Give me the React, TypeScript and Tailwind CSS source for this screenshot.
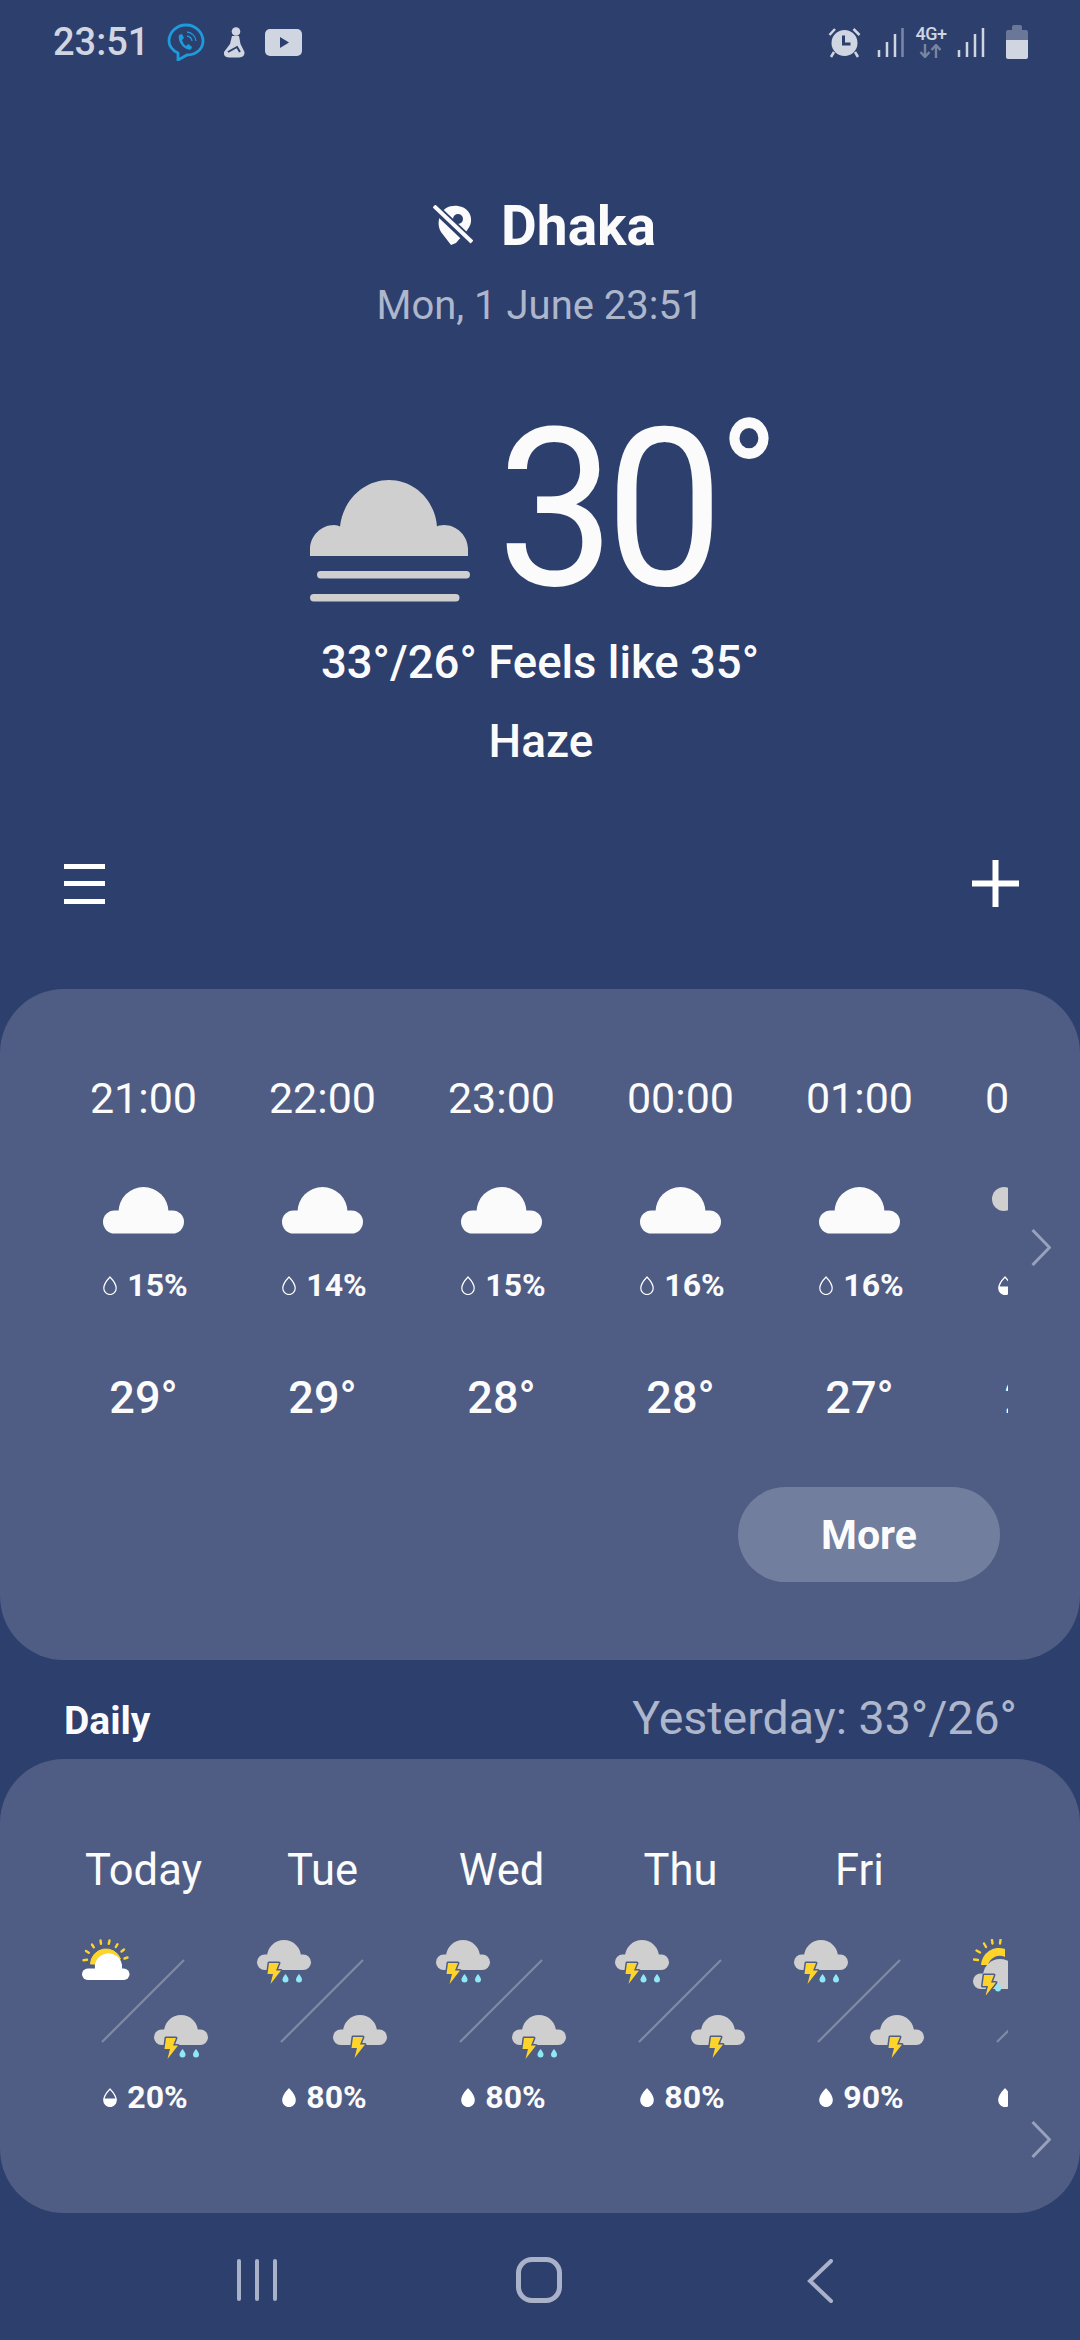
const FONT = "font-['Roboto',sans-serif]"

const hours = [
  { time: "21:00", pop: "15%", temp: "29°" },
  { time: "22:00", pop: "14%", temp: "29°" },
  { time: "23:00", pop: "15%", temp: "28°" },
  { time: "00:00", pop: "16%", temp: "28°" },
  { time: "01:00", pop: "16%", temp: "27°" },
  { time: "02:00", pop: "20%", temp: "27°" },
]

type Kind = "sun" | "rain" | "storm" | "sunstorm"
type Level = "empty" | "half" | "full"

const days: { name: string; top: Kind; bottom: Kind; pop: string; level: Level }[] = [
  { name: "Today", top: "sun", bottom: "rain", pop: "20%", level: "half" },
  { name: "Tue", top: "rain", bottom: "storm", pop: "80%", level: "full" },
  { name: "Wed", top: "rain", bottom: "rain", pop: "80%", level: "full" },
  { name: "Thu", top: "rain", bottom: "storm", pop: "80%", level: "full" },
  { name: "Fri", top: "rain", bottom: "storm", pop: "90%", level: "full" },
  { name: "Sat", top: "sunstorm", bottom: "storm", pop: "60%", level: "full" },
]

function Drop({ level }: { level: Level }) {
  const shape = "M7 1C7 1 13.2 7.4 13.2 12.3A6.2 6.2 0 0 1 .8 12.3C.8 7.4 7 1 7 1Z"
  return (
    <svg width="14" height="19" viewBox="0 0 14 19" className="shrink-0">
      <path d={shape} fill={level === "full" ? "#ffffff" : "none"} stroke="#ffffff" strokeWidth="1.2" />
      {level === "half" && <path d="M.8 10.5H13.2V12.3A6.2 6.2 0 0 1 .8 12.3Z" fill="#ffffff" />}
    </svg>
  )
}

function Cloud() {
  return (
    <svg width="81" height="47" viewBox="0 0 81 47" className="mx-auto">
      <path d="M15.5 25A25 25 0 0 1 65.5 25V40H15.5Z" fill="#fbfbfc" />
      <rect x="0" y="23.500" width="81" height="23" rx="11.500" fill="#fbfbfc" />
    </svg>
  )
}

function HazeIcon() {
  return (
    <svg width="160" height="122" viewBox="0 0 160 122" className="shrink-0">
      <path d="M0 76V69C0 56 11 45 24 45Q28 45 30 46.500C33 20 54 0 79 0S125 20 127 46.500Q129 45 134 45C147 45 158 56 158 69V76Z" fill="#cfcfcf" />
      <rect x="7" y="91" width="153" height="7.500" rx="3.700" fill="#cfcfcf" />
      <rect x="0" y="114" width="149.500" height="7.500" rx="3.700" fill="#cfcfcf" />
    </svg>
  )
}

function Bolt({ x, y }: { x: number; y: number }) {
  return (
    <g transform={`translate(${x} ${y})`}>
      <path d="M3 0H13L10 7.500H15L4.500 21L7 11H1.500Z" fill="#ffd42a" stroke="#4f5d84" strokeWidth="3" paintOrder="stroke" strokeLinejoin="round" />
    </g>
  )
}

function RainDrop({ x }: { x: number }) {
  return <path d={`M${x} 35C${x} 35 ${x + 3} 38.500 ${x + 3} 40.500A3 3 0 0 1 ${x - 3} 40.500C${x - 3} 38.500 ${x} 35 ${x} 35Z`} fill="#8fe8f5" />
}

function GreyCloud() {
  return (
    <g fill="#cfcfcf">
      <path d="M10 18A17 17 0 0 1 44 18V28H10Z" />
      <rect x="0" y="15.500" width="54" height="15.500" rx="7.700" />
    </g>
  )
}

function WeatherIcon({ kind }: { kind: Kind }) {
  if (kind === "sun") {
    return (
      <svg width="48" height="42" viewBox="0 0 48 42" className="block">
        <g stroke="#ffd42a" strokeWidth="2.400" strokeLinecap="round">
          <path d="M1.500 21.300L5 20.800M4 12L6.800 13.800M10 5.500L11.800 8.300M18.500 1.500L19 4.800M27.500 1.500L26.800 4.800M35.500 5.200L33.800 8M42 10.500L39.500 12.500M45.500 18.500L42.500 19.500" />
        </g>
        <path d="M8.500 25A15.500 15.500 0 0 1 38.500 20L35 21A13 13 0 0 0 14 25Z" fill="#ffd42a" stroke="#ffd42a" strokeWidth="1" />
        <path d="M13 30A13.500 13.500 0 0 1 40 26V34H13Z" fill="#ffffff" />
        <rect x="0" y="29.500" width="47.500" height="11.500" rx="5.700" fill="#ffffff" />
      </svg>
    )
  }
  if (kind === "sunstorm") {
    return (
      <svg width="60" height="56" viewBox="0 0 60 56" className="block">
        <g stroke="#ffd42a" strokeWidth="2.400" strokeLinecap="round">
          <path d="M1 20.500L5 21M3.500 11.500L7 13.500M11 4.500L13 8M19 1L19.500 4.500M27.500 1L27 4.500" />
        </g>
        <path d="M8 26A18 18 0 0 1 32 10V18A12 12 0 0 0 15 26Z" fill="#ffd42a" />
        <g transform="translate(0 19)">
          <GreyCloud />
          <Bolt x={8} y={17} />
        </g>
        <path d="M25 44C25 44 28 47.500 28 49.500A3 3 0 0 1 22 49.500C22 47.500 25 44 25 44Z" fill="#8fe8f5" />
      </svg>
    )
  }
  return (
    <svg width="55" height="45" viewBox="0 0 55 45" className="block overflow-visible">
      <GreyCloud />
      {kind === "rain" ? (
        <>
          <Bolt x={9} y={24} />
          <RainDrop x={28.500} />
          <RainDrop x={42} />
        </>
      ) : (
        <Bolt x={17} y={23} />
      )}
    </svg>
  )
}

function Chevron({ className }: { className: string }) {
  return (
    <svg width="20" height="37" viewBox="0 0 20 37" className={className}>
      <path d="M1.500 1L18.500 18.500L1.500 36" fill="none" stroke="#98a2bb" strokeWidth="3" />
    </svg>
  )
}

function StatusBar() {
  return (
    <div className="flex h-[80px] shrink-0 items-center justify-between pl-[53px] pr-[52px] pt-[4px]">
      <div className="flex items-center">
        <span className="text-[38px] font-medium leading-none text-[#d0d5e2]">23:51</span>
        <svg width="38" height="38" viewBox="0 0 38 38" className="ml-[18px]">
          <path d="M19 2C28.500 2 36 9.500 36 18C36 26 29 32 20 32L11 37V30C5 27 2 23 2 18C2 9.500 9.500 2 19 2Z" fill="none" stroke="#1e9bdc" strokeWidth="2.800" />
          <path d="M12 12L15 11L17 15L15 17Q16 21 19 23L21.500 21L25 24L24 26.500C18 28 10 19 12 12Z" fill="#1e9bdc" />
          <path d="M20 9A10 10 0 0 1 29 18M20 13A6 6 0 0 1 25 18" fill="none" stroke="#1e9bdc" strokeWidth="1.300" />
        </svg>
        <svg width="22" height="31" viewBox="0 0 22 31" className="ml-[18px]">
          <circle cx="13" cy="4.500" r="4.300" fill="#d0d5e2" />
          <path d="M9 9H16L17.500 17L21.500 25Q22 30 16 30.500H6Q0 30 1 25L7 17Z" fill="#d0d5e2" />
          <path d="M5 25L14 20L17 25" fill="none" stroke="#2d3f6c" strokeWidth="2" />
        </svg>
        <svg width="37" height="27" viewBox="0 0 37 27" className="ml-[20px]">
          <rect width="37" height="27" rx="5" fill="#d0d5e2" />
          <path d="M15 8L24 13.500L15 19Z" fill="#2d3f6c" />
        </svg>
      </div>
      <div className="flex items-center">
        <svg width="33" height="32" viewBox="0 0 33 32">
          <circle cx="16.500" cy="17" r="13" fill="#d0d5e2" />
          <path d="M15.500 9.500V18H22.500" fill="none" stroke="#2d3f6c" strokeWidth="3" />
          <path d="M1.500 9L7 3M25.500 3L31.500 9M6 26L3 31M27 26L30 31" stroke="#d0d5e2" strokeWidth="2.500" />
        </svg>
        <svg width="28" height="30" viewBox="0 0 28 30" className="ml-[16px]">
          <g stroke="#d0d5e2" strokeWidth="2.500">
            <path d="M2 30V23M10 30V15M18 30V7" />
            <path d="M25.500 30V1" stroke="#7d88a6" />
          </g>
        </svg>
        <div className="ml-[10px] flex w-[32px] flex-col items-center">
          <span className="text-[18px] font-medium leading-[14px] tracking-[-0.5px] text-[#d0d5e2]">4G+</span>
          <svg width="24" height="14" viewBox="0 0 24 14" className="mt-[3px]">
            <path d="M6 0V12M1.500 8L6 13L10.500 8M17 14V2M12.500 6L17 1L21.500 6" fill="none" stroke="#79859f" strokeWidth="2.400" />
          </svg>
        </div>
        <svg width="28" height="30" viewBox="0 0 28 30" className="ml-[10px]">
          <path d="M2 30V23M10 30V15M18 30V7M26 30V1" stroke="#d0d5e2" strokeWidth="2.500" />
        </svg>
        <div className="ml-[21px] flex w-[22px] flex-col items-center">
          <div className="h-[5px] w-[10px] rounded-t-[2px] bg-[#6b7799]" />
          <div className="h-[10px] w-[22px] rounded-t-[2px] bg-[#6b7799]" />
          <div className="h-[19px] w-[22px] rounded-b-[2px] bg-[#d0d5e2]" />
        </div>
      </div>
    </div>
  )
}

function Hero() {
  return (
    <div className="flex shrink-0 flex-col items-center pt-[116px]">
      <div className="flex h-[60px] items-center pl-[9px]">
        <svg width="40" height="42" viewBox="0 0 40 42">
          <path d="M7 11C9 3 18 0 25 1C34 2 39 9 38 17C37 24 30 30 23 38L18 40L8 27C5 22 5 16 7 11Z" fill="#fbfbfc" />
          <circle cx="25" cy="14" r="5" fill="#2d3f6c" />
          <path d="M0 1L40 39" stroke="#2d3f6c" strokeWidth="9" />
          <path d="M1 1L39 37" stroke="#fbfbfc" strokeWidth="4" />
        </svg>
        <span className="ml-[28px] text-[55px] font-bold leading-none text-[#fbfbfc]">Dhaka</span>
      </div>
      <div className="mt-[25px] h-[50px] text-[40px] font-[450] leading-[50px] text-[#aeb6cc]">Mon, 1 June 23:51</div>
      <div className="mt-[69px] flex h-[210px] w-[460px] items-start">
        <div className="mt-[80px]">
          <HazeIcon />
        </div>
        <div className="-mt-[10px] ml-[27px] origin-left scale-x-[0.955] whitespace-nowrap text-[220px] font-normal leading-[240px] tracking-[-10px] text-[#fbfbfc]">
          30<span className="ml-[6px] align-[52px] text-[160px] font-medium leading-none tracking-normal">°</span>
        </div>
      </div>
      <div className="mt-[25px] h-[56px] text-[45.500px] font-medium leading-[56px] text-[#fbfbfc]">33°/26° Feels like 35°</div>
      <div className="mt-[25px] h-[50px] pl-[2px] text-[46px] font-medium leading-[50px] text-[#fbfbfc]">Haze</div>
    </div>
  )
}

function Toolbar() {
  return (
    <div className="mt-[94px] flex h-[47px] shrink-0 items-center justify-between pl-[64px] pr-[61px]">
      <div className="flex h-[40px] w-[41px] flex-col justify-between">
        <div className="h-[5px] bg-white" />
        <div className="h-[5px] bg-white" />
        <div className="h-[5px] bg-white" />
      </div>
      <svg width="47" height="47" viewBox="0 0 47 47">
        <path d="M23.500 0V47M0 23.500H47" stroke="#ffffff" strokeWidth="6" />
      </svg>
    </div>
  )
}

function HourlyCard() {
  return (
    <div className="relative mt-[82px] h-[671px] shrink-0 rounded-[64px] bg-[#4f5d84] pt-[84px]">
      <div className="ml-[54px] flex w-[954px] overflow-hidden">
        {hours.map((h, i) => (
          <div key={h.time} className="w-[179px] shrink-0 text-center text-[#fbfbfc]">
            <div className="h-[50px] text-[43px] font-[450] leading-[50px]">{h.time}</div>
            <div className="mt-[64px] h-[47px]">
              {i < 5 ? <Cloud /> : <div className="ml-[43px] mt-[13px] h-[24px] w-[24px] rounded-full bg-[#cfcfcf]" />}
            </div>
            <div className="mt-[33px] flex h-[36px] items-center justify-center gap-[10px] pl-[4px] text-[32px] font-bold">
              <Drop level={i < 5 ? "empty" : "half"} />
              <span>{h.pop}</span>
            </div>
            <div className="mt-[70px] h-[50px] text-[45px] font-medium leading-[50px]">{h.temp}</div>
          </div>
        ))}
      </div>
      <div className="mt-[64px] flex justify-end pr-[80px]">
        <div className="flex h-[95px] w-[262px] items-center justify-center rounded-full bg-[#717e9e] pt-[3px] text-[41px] font-bold text-[#fbfbfc]">More</div>
      </div>
      <Chevron className="absolute left-[1031px] top-[240px]" />
    </div>
  )
}

function DailyHeader() {
  return (
    <div className="flex h-[99px] shrink-0 items-center justify-between pl-[64px] pr-[63px] pt-[24px]">
      <span className="text-[39px] font-bold leading-none text-[#fbfbfc]">Daily</span>
      <span className="-mt-[6px] text-[46.500px] font-[450] leading-none text-[#aeb6cc]">Yesterday: 33°/26°</span>
    </div>
  )
}

function DailyCard() {
  return (
    <div className="relative h-[454px] shrink-0 rounded-[64px] bg-[#4f5d84] pt-[87px]">
      <div className="ml-[54px] flex w-[954px] overflow-hidden">
        {days.map((d, i) => (
          <div key={d.name} className="w-[179px] shrink-0 text-center text-[#fbfbfc]">
            <div className="h-[50px] text-[43.500px] font-[450] leading-[50px]">{d.name}</div>
            <div className="relative mt-[43px] h-[120px]">
              <div className={i === 0 ? "pl-[28px]" : "pl-[24px]"}>
                <WeatherIcon kind={d.top} />
              </div>
              <div className="absolute left-[100px] top-[75px]">
                <WeatherIcon kind={d.bottom} />
              </div>
              <svg width="84" height="84" viewBox="0 0 84 84" className="absolute left-[47px] top-[20px]">
                <path d="M83 1L1 83" stroke="#7f8aa6" strokeWidth="2.200" />
              </svg>
            </div>
            <div className="mt-[20px] flex h-[36px] items-center justify-center gap-[10px] pl-[4px] text-[32px] font-bold">
              <Drop level={d.level} />
              <span>{d.pop}</span>
            </div>
          </div>
        ))}
      </div>
      <Chevron className="absolute left-[1031px] top-[362px]" />
    </div>
  )
}

function NavBar() {
  return (
    <div className="flex flex-1 items-start pt-[44px]">
      <div className="ml-[237px] flex h-[44px] w-[40px] justify-between pt-[2px]">
        <div className="w-[4px] rounded-full bg-[#a9b2c8]" />
        <div className="w-[4px] rounded-full bg-[#a9b2c8]" />
        <div className="w-[4px] rounded-full bg-[#a9b2c8]" />
      </div>
      <div className="ml-[239px] h-[46px] w-[46px] rounded-[16px] border-[5px] border-[#a9b2c8]" />
      <svg width="26" height="44" viewBox="0 0 26 44" className="ml-[245px] mt-[2px]">
        <path d="M24 2L3 22L24 42" fill="none" stroke="#a9b2c8" strokeWidth="4" strokeLinecap="round" />
      </svg>
    </div>
  )
}

export default function App() {
  return (
    <div className={`flex h-[2340px] w-[1080px] flex-col overflow-hidden bg-[#2d3f6c] ${FONT}`}>
      <StatusBar />
      <Hero />
      <Toolbar />
      <HourlyCard />
      <DailyHeader />
      <DailyCard />
      <NavBar />
    </div>
  )
}
